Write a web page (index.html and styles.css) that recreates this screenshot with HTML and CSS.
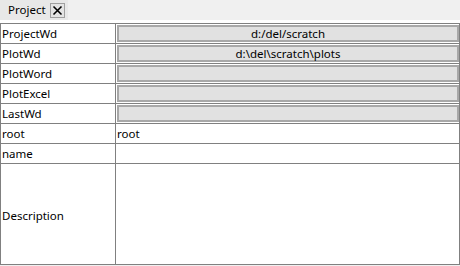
FILE: index.html
```html
<!DOCTYPE html>
<html lang="en">
<head>
  <meta charset="utf-8">
  <title>Project</title>
  <link rel="stylesheet" href="styles.css">
</head>
<body>
  <div class="tabbar">
    <div class="tab">
      <span class="tab__title">Project</span>
      <button class="tab__close" aria-label="Close">
        <svg width="11" height="11" viewBox="0 0 11 11">
          <path d="M1.5 1.5l8 8M9.5 1.5l-8 8" stroke="#000" stroke-width="1.6" fill="none"/>
        </svg>
      </button>
    </div>
  </div>
  <table class="props">
    <tr>
      <td class="props__key">ProjectWd</td>
      <td class="props__val"><div class="field">d:/del/scratch</div></td>
    </tr>
    <tr>
      <td class="props__key">PlotWd</td>
      <td class="props__val"><div class="field">d:\del\scratch\plots</div></td>
    </tr>
    <tr>
      <td class="props__key">PlotWord</td>
      <td class="props__val"><div class="field"></div></td>
    </tr>
    <tr>
      <td class="props__key">PlotExcel</td>
      <td class="props__val"><div class="field"></div></td>
    </tr>
    <tr>
      <td class="props__key">LastWd</td>
      <td class="props__val"><div class="field"></div></td>
    </tr>
    <tr>
      <td class="props__key">root</td>
      <td class="props__val">root</td>
    </tr>
    <tr>
      <td class="props__key">name</td>
      <td class="props__val"></td>
    </tr>
    <tr class="props__tall">
      <td class="props__key">Description</td>
      <td class="props__val"></td>
    </tr>
  </table>
</body>
</html>
```

FILE: styles.css
```css
*, *::before, *::after {
  margin: 0;
  padding: 0;
  box-sizing: border-box;
}

html {
  color: #000000;
  font-size: 11.5px;
  font-family: "Noto Sans", "Open Sans", sans-serif;
}

body {
  background-color: #F0F0F0;
}

.tabbar {
  height: 23px;
  border-bottom: 3px solid #FFFFFF;
  background-color: #F0F0F0;
}

.tab {
  display: inline-flex;
  align-items: center;
  gap: 4px;
  height: 20px;
  padding: 0 3px 0 8px;
  background-color: #E8E8E8;
}

.tab__title {
  line-height: 20px;
}

.tab__close {
  display: flex;
  align-items: center;
  justify-content: center;
  width: 15px;
  height: 15px;
  border: 1px solid #A0A0A0;
  background-color: #E4E4E4;
}

.props {
  width: 100%;
  height: 242px;
  border-collapse: collapse;
  background-color: #FFFFFF;
}

.props td {
  height: 20px;
  border: 1px solid #808080;
  padding: 0 0 0 1px;
  line-height: 18px;
  white-space: nowrap;
}

.props__key {
  width: 115px;
}

.props__val {
  padding: 1px;
}

.props .props__tall td {
  height: auto;
  padding-top: 3px;
}

.field {
  height: 17px;
  border: 2px solid #A8A8A8;
  background-color: #E1E1E1;
  line-height: 13px;
  text-align: center;
}
```
